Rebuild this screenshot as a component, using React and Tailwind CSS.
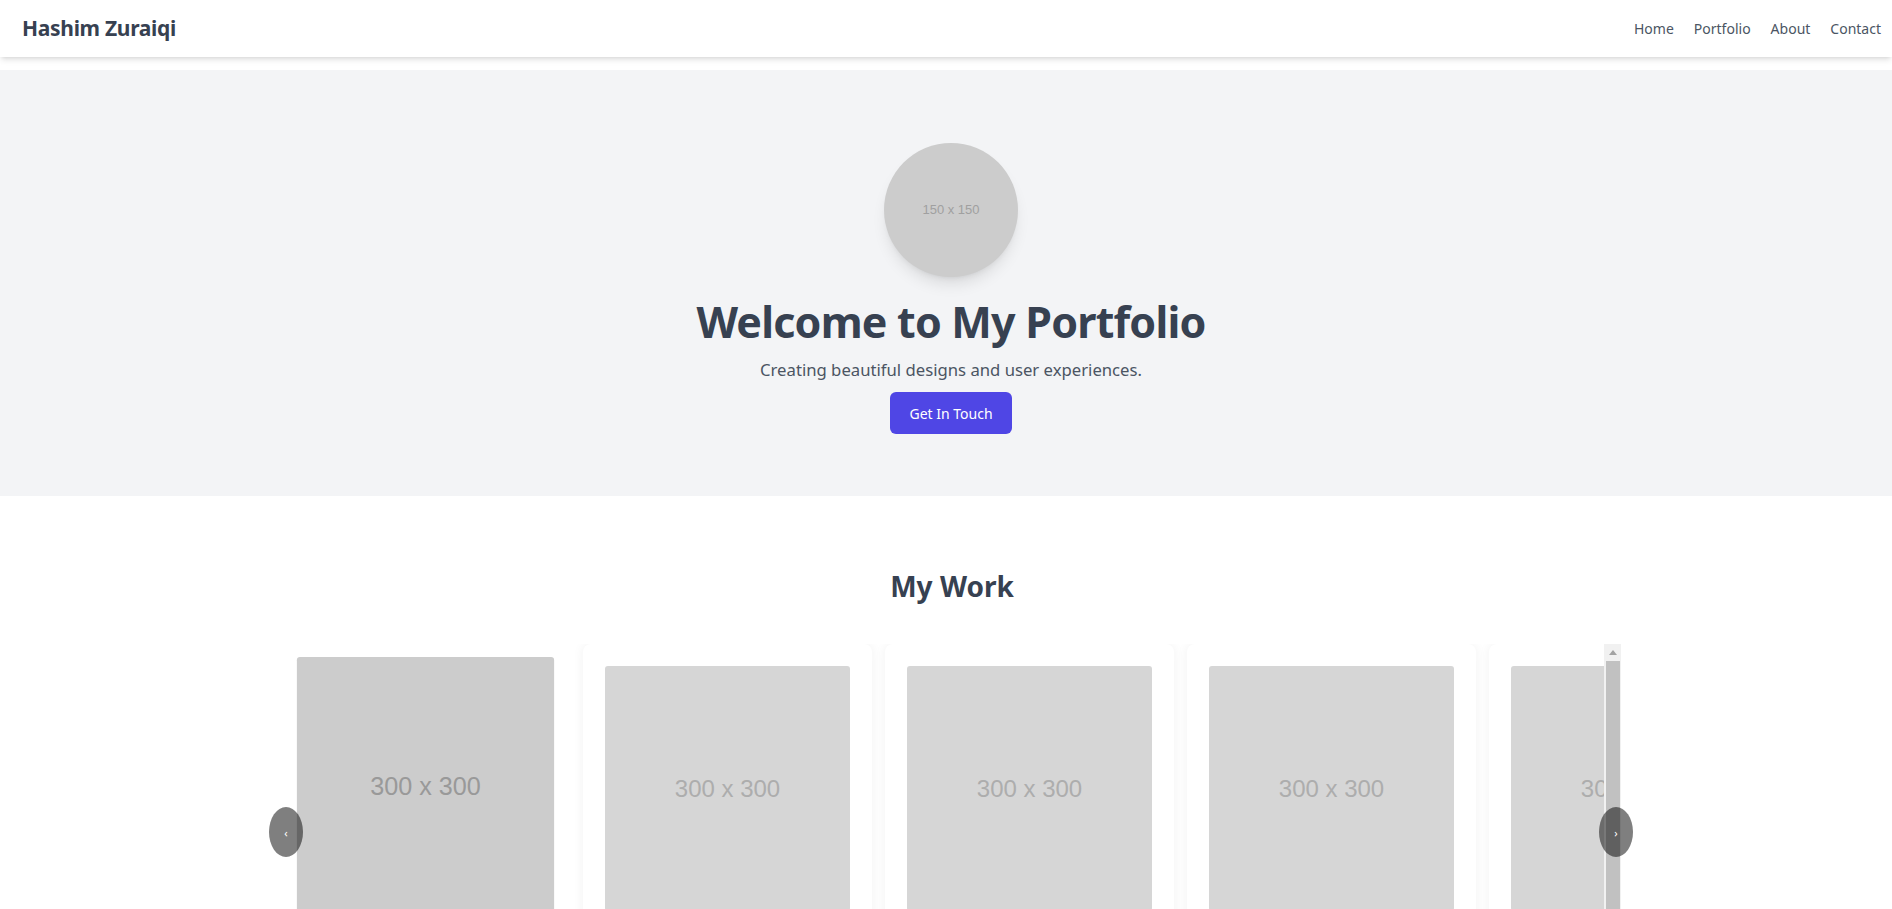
import React, { useState } from 'react';

const projects = [
  { id: 1, title: 'Project One', text: 'Brand identity and web design.' },
  { id: 2, title: 'Project Two', text: 'Mobile app interface.' },
  { id: 3, title: 'Project Three', text: 'E-commerce landing page.' },
  { id: 4, title: 'Project Four', text: 'Dashboard UI kit.' },
  { id: 5, title: 'Project Five', text: 'Marketing website.' },
  { id: 6, title: 'Project Six', text: 'Illustration set.' },
];

function Navbar() {
  return (
    <nav className="h-[57px] bg-white shadow-md flex items-center justify-between pl-[22px] pr-[11px] relative z-10">
      <a href="#" className="text-[21px] font-bold text-[#374151] tracking-[-0.3px]">Hashim Zuraiqi</a>
      <ul className="flex items-center gap-[20px] text-[14px] text-[#4b5563]">
        <li><a href="#">Home</a></li>
        <li><a href="#">Portfolio</a></li>
        <li><a href="#">About</a></li>
        <li><a href="#">Contact</a></li>
      </ul>
    </nav>
  );
}

function Hero() {
  return (
    <section className="mt-[13px] bg-[#f3f4f6] pt-[73px] pb-[62px] pl-[10px] flex flex-col items-center">
      {/* foto de perfil (placeholder) */}
      <div className="w-[134px] h-[134px] rounded-full bg-[#cccccc] shadow-lg flex items-center justify-center">
        <span className="font-['Liberation_Sans',Arial,sans-serif] text-[13px] text-[#a0a0a0]">150 x 150</span>
      </div>
      <h1 className="mt-[17px] text-[43px] leading-[56px] tracking-[-0.8px] font-bold text-[#374151]">Welcome to My Portfolio</h1>
      <p className="mt-[8px] text-[16.7px] leading-[24px] text-[#4b5563]">Creating beautiful designs and user experiences.</p>
      <a href="#" className="mt-[10px] w-[122px] h-[42px] flex items-center justify-center rounded-md bg-[#4f46e5] text-white text-[14px]">Get In Touch</a>
    </section>
  );
}

// barra de rolagem do carrossel (o navegador headless nao desenha a nativa)
function ScrollBar() {
  return (
    <div className="w-[17px] shrink-0 bg-[#f1f1f1] flex flex-col">
      <div className="h-[17px] flex items-center justify-center">
        <svg width="8" height="5" viewBox="0 0 8 5">
          <path d="M4 0 L8 5 L0 5 Z" fill="#a3a3a3" />
        </svg>
      </div>
      <div className="flex-1 ml-[2px] mr-[1px] bg-[#c1c1c1]" />
    </div>
  );
}

function Portfolio() {
  const [active, setActive] = useState(0);

  return (
    <section className="bg-white pt-[69px] pb-16">
      <h2 className="ml-[12px] text-center text-[28px] font-bold text-[#374151]">My Work</h2>
      <div className="relative mx-auto mt-[37px] w-[1350px] flex">
        <div className="flex-1 flex gap-[13px] overflow-hidden px-[10px]">
          {projects.map((p, i) => (
            <div
              key={p.id}
              className={
                i === active
                  ? 'w-[289px] shrink-0 bg-white rounded-lg p-[22px] scale-105 opacity-100'
                  : 'w-[289px] shrink-0 bg-white rounded-lg p-[22px] shadow-[0_0_12px_rgba(0,0,0,0.06)] opacity-80'
              }
            >
              <div className="w-[245px] h-[245px] rounded-[3px] bg-[#cccccc] flex items-center justify-center">
                <span className="font-['Liberation_Sans',Arial,sans-serif] text-[24px] text-[#999999]">300 x 300</span>
              </div>
              <h3 className="mt-4 text-xl font-semibold text-[#374151]">{p.title}</h3>
              <p className="mt-2 text-[#4b5563]">{p.text}</p>
              <a href="#" className="mt-3 inline-block text-[#4f46e5]">View Project</a>
            </div>
          ))}
        </div>
        <ScrollBar />
        <button
          onClick={() => setActive((active - 1 + projects.length) % projects.length)}
          className="absolute left-[-2px] top-[163px] z-10 w-[34px] h-[50px] rounded-[50%] bg-black/50 text-white text-[11px] leading-none flex items-center justify-center"
        >
          ‹
        </button>
        <button
          onClick={() => setActive((active + 1) % projects.length)}
          className="absolute right-[-12px] top-[163px] z-10 w-[34px] h-[50px] rounded-[50%] bg-black/50 text-white text-[11px] leading-none flex items-center justify-center"
        >
          ›
        </button>
      </div>
    </section>
  );
}

export default function App() {
  return (
    <div className="min-h-screen bg-white font-['Noto_Sans',sans-serif]">
      <Navbar />
      <Hero />
      <Portfolio />
    </div>
  );
}
